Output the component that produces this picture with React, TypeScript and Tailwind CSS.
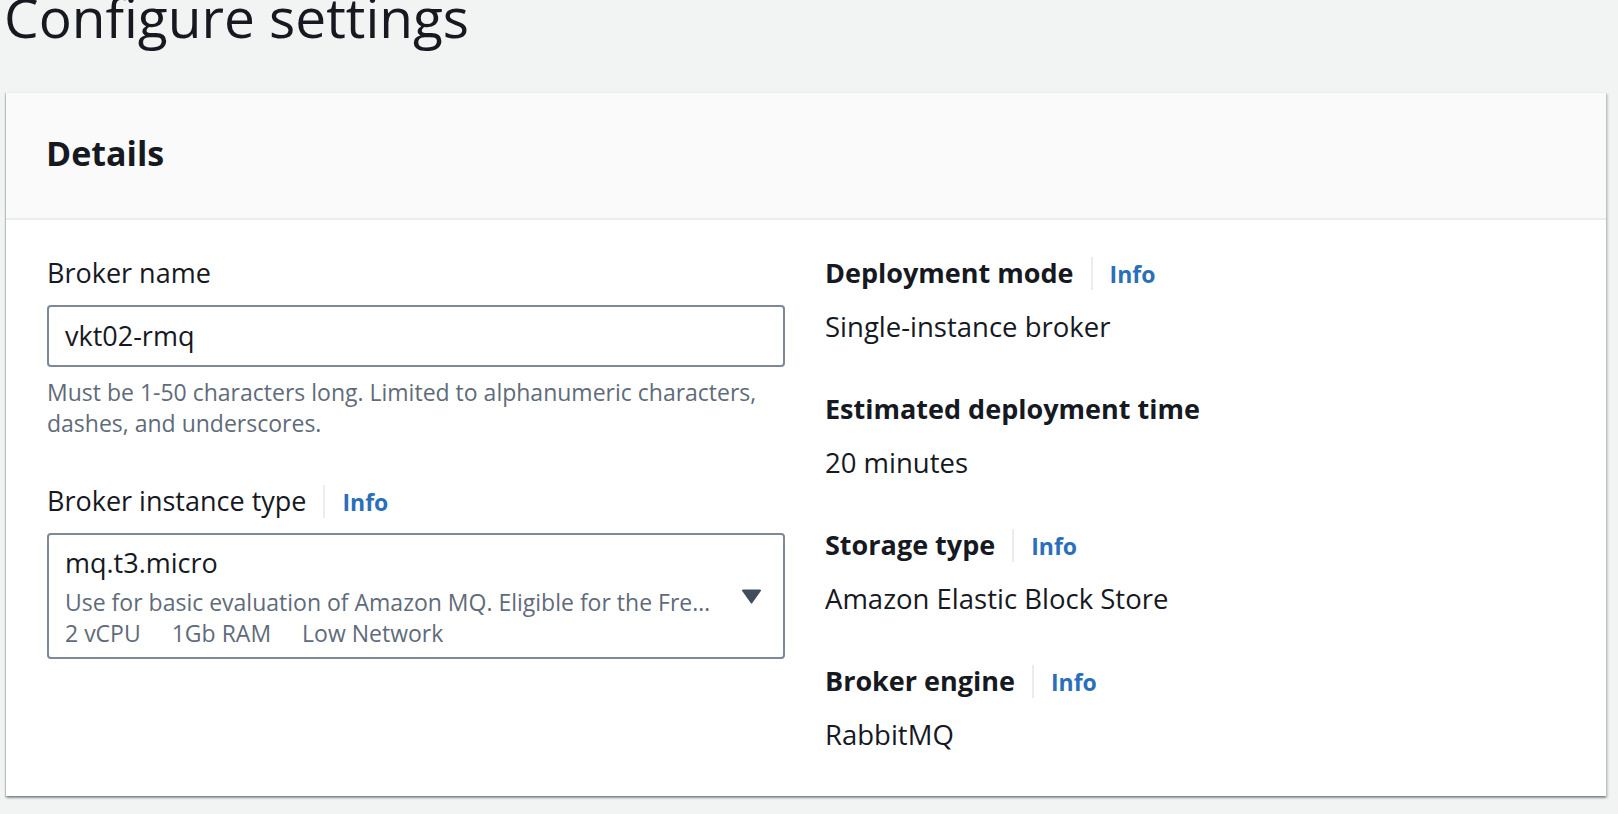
import React from "react";

function InfoLabel({ label, bold }: { label: string; bold?: boolean }) {
  return (
    <div className="flex items-baseline h-[42px]">
      <span className={`text-[27px] leading-[42px] ${bold ? "font-bold" : ""}`}>{label}</span>
      <span className="self-center ml-[17px] w-[2px] h-[33px] bg-[#eaeded]" />
      <a className="ml-[17px] text-[23px] leading-[42px] font-bold text-[#2a6fba]">Info</a>
    </div>
  );
}

function KeyValue({ label, value, info, first }: { label: string; value: string; info?: boolean; first?: boolean }) {
  return (
    <div className={first ? "" : "mt-[40px]"}>
      {info ? (
        <InfoLabel label={label} bold />
      ) : (
        <div className="text-[27px] leading-[42px] font-bold">{label}</div>
      )}
      <div className="mt-[12px] text-[27.5px] leading-[42px]">{value}</div>
    </div>
  );
}

export default function App() {
  return (
    <div className="min-h-[814px] bg-[#f2f3f3] font-['Open_Sans',sans-serif] text-[#16191f] overflow-hidden">
      <h1 className="pl-[4px] text-[55px] leading-[34px] font-normal">Configure settings</h1>
      <div className="ml-[6px] mt-[58px] w-[1600px] bg-white border-t border-[#eaeded] shadow-[0_2px_2px_0_rgba(0,28,36,0.3),2px_2px_2px_0_rgba(0,28,36,0.15),-1px_1px_1px_0_rgba(0,28,36,0.15)]">
        <div className="h-[127px] bg-[#fafafa] border-b-2 border-[#eaeded] pl-[40px] pt-[40px]">
          <h2 className="text-[34px] leading-[40px] font-bold">Details</h2>
        </div>
        <div className="grid grid-cols-[738px_738px] gap-x-[40px] pl-[41px] pt-[32px] pb-[40px]">
          <div>
            <div className="text-[27px] leading-[42px]">Broker name</div>
            <div className="mt-[11px] h-[62px] border-2 border-[#7d8998] rounded-[4px] px-[16px] flex items-center">
              <span className="text-[27px] leading-[42px]">vkt02-rmq</span>
            </div>
            <p className="mt-[10px] text-[23px] leading-[31px] text-[#5f6b7a]">
              Must be 1-50 characters long. Limited to alphanumeric characters, dashes, and underscores.
            </p>
            <div className="mt-[41px]">
              <InfoLabel label="Broker instance type" />
            </div>
            <div className="mt-[11px] h-[126px] border-2 border-[#7d8998] rounded-[4px] flex">
              <div className="flex-1 min-w-0 pl-[16px] pt-[7px]">
                <div className="text-[27px] leading-[42px]">mq.t3.micro</div>
                <div className="mt-[3px] text-[23px] leading-[31px] text-[#5f6b7a] truncate">
                  Use for basic evaluation of Amazon MQ. Eligible for the Free Tier.
                </div>
                <div className="flex gap-[31px] text-[23px] leading-[31px] text-[#5f6b7a]">
                  <span>2 vCPU</span>
                  <span>1Gb RAM</span>
                  <span>Low Network</span>
                </div>
              </div>
              <div className="self-center ml-[30px] mr-[22px] flex">
                <svg width="19" height="15" viewBox="0 0 19 15">
                  <path d="M1 0.5h17a1 1 0 0 1 .8 1.6L10.3 14a1 1 0 0 1-1.6 0L.2 2.1A1 1 0 0 1 1 .5z" fill="#414d5c" />
                </svg>
              </div>
            </div>
          </div>
          <div>
            <KeyValue first info label="Deployment mode" value="Single-instance broker" />
            <KeyValue label="Estimated deployment time" value="20 minutes" />
            <KeyValue info label="Storage type" value="Amazon Elastic Block Store" />
            <KeyValue info label="Broker engine" value="RabbitMQ" />
          </div>
        </div>
      </div>
    </div>
  );
}
